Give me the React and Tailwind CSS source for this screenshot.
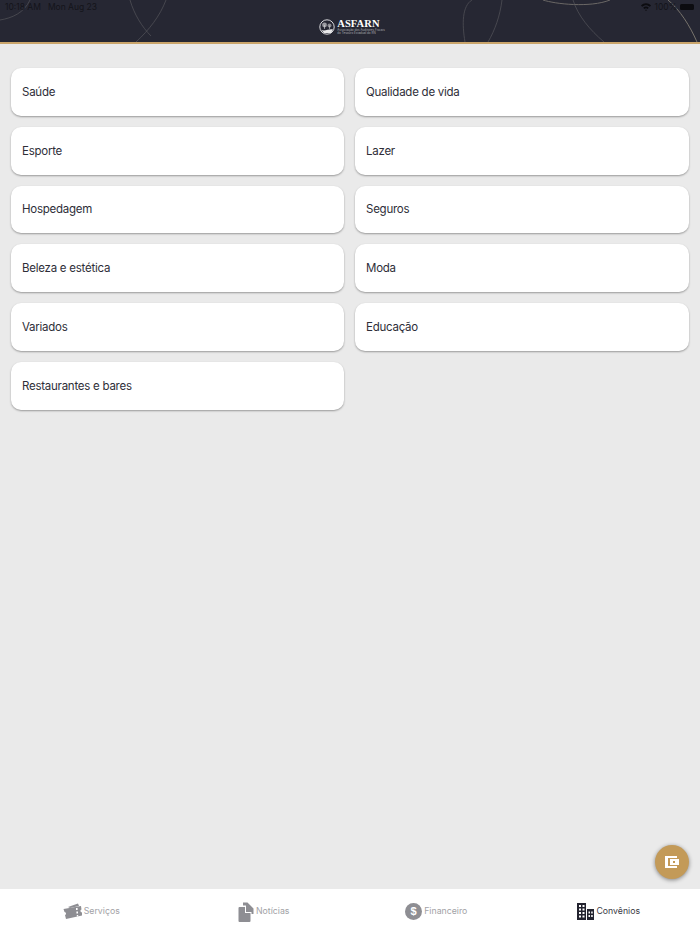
import React from 'react';

const LEFT = ['Saúde', 'Esporte', 'Hospedagem', 'Beleza e estética', 'Variados', 'Restaurantes e bares'];
const RIGHT = ['Qualidade de vida', 'Lazer', 'Seguros', 'Moda', 'Educação'];

function Card({ label }) {
  return (
    <div className="h-[47.8px] flex items-center pt-[1px] px-[11px] bg-white rounded-[10px] shadow-[0_1px_2px_rgba(0,0,0,0.35)] text-[11.5px] tracking-[-0.25px] text-[#2e2e38]">
      {label}
    </div>
  );
}

function HeaderCurves() {
  return (
    <svg className="absolute inset-0 w-full h-full" viewBox="0 0 700 42" fill="none" stroke="#55545a" strokeWidth="0.7">
      <path d="M0 20 C12 18 24 13 30 0" />
      <path d="M130 0 C134 14 142 27 151 36" />
      <path d="M166 0 C160 16 149 30 136 42" />
      <path d="M472 0 C462 6 462 24 465 42" />
      <path d="M502 0 C500 16 495 30 488 42" />
      <path d="M543 0 C555 4 590 8 610 0" stroke="#6a6765" strokeWidth="1" />
      <path d="M573 0 C578 16 590 30 604 42" />
      <path d="M668 0 C680 10 690 26 697 42" stroke="#77736c" strokeWidth="1" />
    </svg>
  );
}

function Logo() {
  return (
    <div className="relative flex items-center gap-[2px] ml-[4px]">
      <svg width="16" height="16" viewBox="0 0 16 16" fill="none">
        <circle cx="8" cy="8" r="7.2" stroke="#d8d8dc" strokeWidth="1" />
        <path d="M2 10.5 C5 13 10 9.5 14 10.5 L12 14 L5 14 Z" fill="#e8e8ea" />
        <circle cx="5.5" cy="6" r="2.4" fill="#9a9aa0" />
        <circle cx="10.5" cy="6.5" r="2" fill="#8a8a90" />
        <path d="M5.5 6 V10 M10.5 6.5 V10" stroke="#d8d8dc" strokeWidth="0.6" />
      </svg>
      <div className="flex flex-col items-start">
        <div className="font-['Liberation_Serif',serif] font-bold text-[10.5px] leading-[10px] tracking-[0.1px] text-white">ASFARN</div>
        <div className="text-[3px] leading-[3.5px] text-[#a8a8ae] whitespace-nowrap">Associação dos Auditores Fiscais</div>
        <div className="text-[3px] leading-[3.5px] text-[#a8a8ae] whitespace-nowrap">do Tesouro Estadual do RN</div>
      </div>
    </div>
  );
}

function TicketIcon() {
  return (
    <svg width="19" height="17" viewBox="0 0 19 17" fill="#8e8e93">
      <path d="M5 4 L15 0.5 L16 3 L7 5 Z" />
      <path d="M0.5 6 L18 3 L18.5 6.5 C17 7 17 9 19 9.5 L19 12.5 L3 16 L2 12 C3.5 11.5 3.5 9.5 1.5 9 Z" />
      <rect x="13" y="5" width="1.6" height="2" fill="#fff" />
      <rect x="13.4" y="8.5" width="1.6" height="2" fill="#fff" />
      <rect x="13.8" y="12" width="1.4" height="1.5" fill="#fff" />
    </svg>
  );
}

function NewsIcon() {
  return (
    <svg width="16" height="20" viewBox="0 0 16 20" fill="#8e8e93">
      <path d="M1.5 5 H7 V11 H12.5 V19 A1 1 0 0 1 11.5 20 H1.5 A1 1 0 0 1 0.5 19 V6 A1 1 0 0 1 1.5 5 Z" />
      <path d="M5 0.5 H9.5 L15.5 6.5 V12 H13.5 V10 H8 V3.5 H5 Z" />
    </svg>
  );
}

function DollarIcon() {
  return (
    <div className="w-[17px] h-[17px] rounded-full bg-[#8e8e93] flex items-center justify-center text-white text-[11px] font-bold font-['Liberation_Sans',sans-serif]">
      $
    </div>
  );
}

function BuildingIcon() {
  return (
    <svg width="17" height="17" viewBox="0 0 17 17" fill="#23232f">
      <path fillRule="evenodd" d="M0 0 H9 V17 H0 Z M2 2 V4 H4 V2 Z M5.5 2 V4 H7.5 V2 Z M2 5.5 V7.5 H4 V5.5 Z M5.5 5.5 V7.5 H7.5 V5.5 Z M2 9 V11 H4 V9 Z M5.5 9 V11 H7.5 V9 Z M2 12.5 V14.5 H4 V12.5 Z M5.5 12.5 V14.5 H7.5 V12.5 Z" />
      <path fillRule="evenodd" d="M10 6 H17 V17 H10 Z M11.5 8.5 V10.5 H13 V8.5 Z M14.2 8.5 V10.5 H15.7 V8.5 Z M11.5 12 V14 H13 V12 Z M14.2 12 V14 H15.7 V12 Z" />
    </svg>
  );
}

function Tab({ icon, label, active }) {
  return (
    <div className="flex-1 flex items-center justify-center gap-[2px]">
      {icon}
      <span className={`text-[8.75px] ${active ? 'text-[#3a3a44]' : 'text-[#a2a2a6]'}`}>{label}</span>
    </div>
  );
}

export default function App() {
  return (
    <div className="relative w-[700px] h-[934px] flex flex-col bg-[#eaeaea] font-['Inter',sans-serif] overflow-hidden">
      <header className="relative h-[44px] shrink-0 flex items-center justify-center pt-[12px] bg-[#262733] border-b-[2px] border-[#caa56b]">
        <HeaderCurves />
        <div className="absolute left-[5px] top-[2px] flex gap-[7px] text-[8.5px] leading-[10px] text-[#14141a]">
          <span>10:18 AM</span>
          <span>Mon Aug 23</span>
        </div>
        <div className="absolute right-[6px] top-[2px] flex items-center gap-[3px] text-[8.5px] leading-[10px] text-[#14141a]">
          <svg width="10" height="8" viewBox="0 0 10 8" fill="#0c0c10">
            <path d="M0 2.6 C2.8 -0.4 7.2 -0.4 10 2.6 L8.8 3.8 C6.6 1.6 3.4 1.6 1.2 3.8 Z" />
            <path d="M2.2 4.8 C3.8 3.2 6.2 3.2 7.8 4.8 L6.6 6 C5.6 5 4.4 5 3.4 6 Z" />
            <path d="M5 8 L4 7 C4.6 6.5 5.4 6.5 6 7 Z" />
          </svg>
          <span>100%</span>
          <div className="w-[14px] h-[6px] bg-[#0c0c10] rounded-[1.5px]" />
        </div>
        <Logo />
      </header>

      <main className="flex-1 grid grid-cols-[333px_334px] gap-x-[11px] content-start px-[11px] pt-[24px]">
        <div className="flex flex-col gap-[11px]">
          {LEFT.map((l) => <Card key={l} label={l} />)}
        </div>
        <div className="flex flex-col gap-[11px]">
          {RIGHT.map((l) => <Card key={l} label={l} />)}
        </div>
      </main>

      <button className="absolute left-[655px] top-[845px] w-[34px] h-[34px] rounded-full bg-[#c39a58] shadow-[0_1px_4px_rgba(0,0,0,0.45)] flex items-center justify-center">
        <svg width="14" height="12" viewBox="0 0 14 12" fill="#fff">
          <path fillRule="evenodd" d="M0 0 H12 V2 H3 V10 H12 V12 H0 Z" />
          <path fillRule="evenodd" d="M5 3 H14 V9 H5 Z M8 5 V7 H10 V5 Z" />
        </svg>
      </button>

      <nav className="h-[45px] shrink-0 flex px-[5px] bg-white">
        <Tab icon={<TicketIcon />} label="Serviços" />
        <Tab icon={<NewsIcon />} label="Notícias" />
        <Tab icon={<DollarIcon />} label="Financeiro" />
        <Tab icon={<BuildingIcon />} label="Convênios" active />
      </nav>
    </div>
  );
}
